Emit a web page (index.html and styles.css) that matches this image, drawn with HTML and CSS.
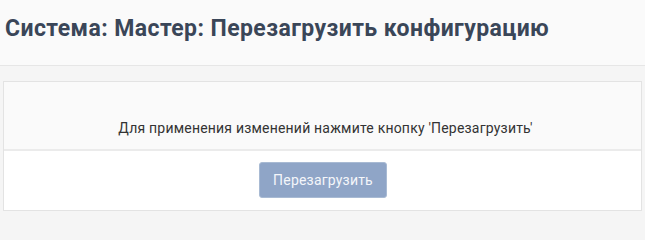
FILE: index.html
```html
<!DOCTYPE html>
<html lang="ru">
<head>
<meta charset="utf-8">
<link rel="stylesheet" href="styles.css">
</head>
<body>
<header class="page-header">
  <h1 class="title">Система: Мастер: Перезагрузить конфигурацию</h1>
</header>
<main class="content">
  <section class="panel">
    <div class="panel-body">
      <p class="message">Для применения изменений нажмите кнопку 'Перезагрузить'</p>
    </div>
    <div class="panel-footer">
      <button class="btn" type="button">Перезагрузить</button>
    </div>
  </section>
</main>
</body>
</html>
```
FILE: styles.css
```css
html, body {
  margin: 0;
  padding: 0;
}
body {
  background: #f5f5f5;
  font-family: Roboto, "Noto Sans", sans-serif;
  width: 645px;
  height: 216px;
  overflow: hidden;
}
.page-header {
  background: #fafafa;
  border-bottom: 1px solid #e6e6e6;
  display: flex;
  align-items: center;
  padding-left: 5px;
  box-sizing: border-box;
  height: 66px;
}
.title {
  margin: 0;
  font-size: 23px;
  font-weight: 700;
  color: #3a4658;
  letter-spacing: 0.42px;
  position: relative;
  top: -4px;
}
.content {
  padding: 15px 3px 0 3px;
}
.panel {
  border: 1px solid #e3e3e3;
  background: #ffffff;
}
.panel-body {
  background: #fafafa;
  height: 69px;
  border-bottom: 2px solid #ebebeb;
  display: flex;
  align-items: flex-end;
  justify-content: center;
  box-sizing: border-box;
}
.message {
  margin: 0 0 13px 0;
  font-size: 14px;
  letter-spacing: 0.2px;
  color: #333;
  position: relative;
  left: 3px;
}
.panel-footer {
  height: 59px;
  display: flex;
  justify-content: center;
  align-items: flex-start;
  padding-top: 11px;
  box-sizing: border-box;
}
.btn {
  width: 128px;
  height: 36px;
  background: #8fa5c7;
  border: 1px solid #a8bad3;
  border-radius: 3px;
  color: #f4f6fa;
  font-family: inherit;
  font-size: 14px;
  letter-spacing: 0.2px;
  padding: 0;
  margin-left: 1px;
}
```
